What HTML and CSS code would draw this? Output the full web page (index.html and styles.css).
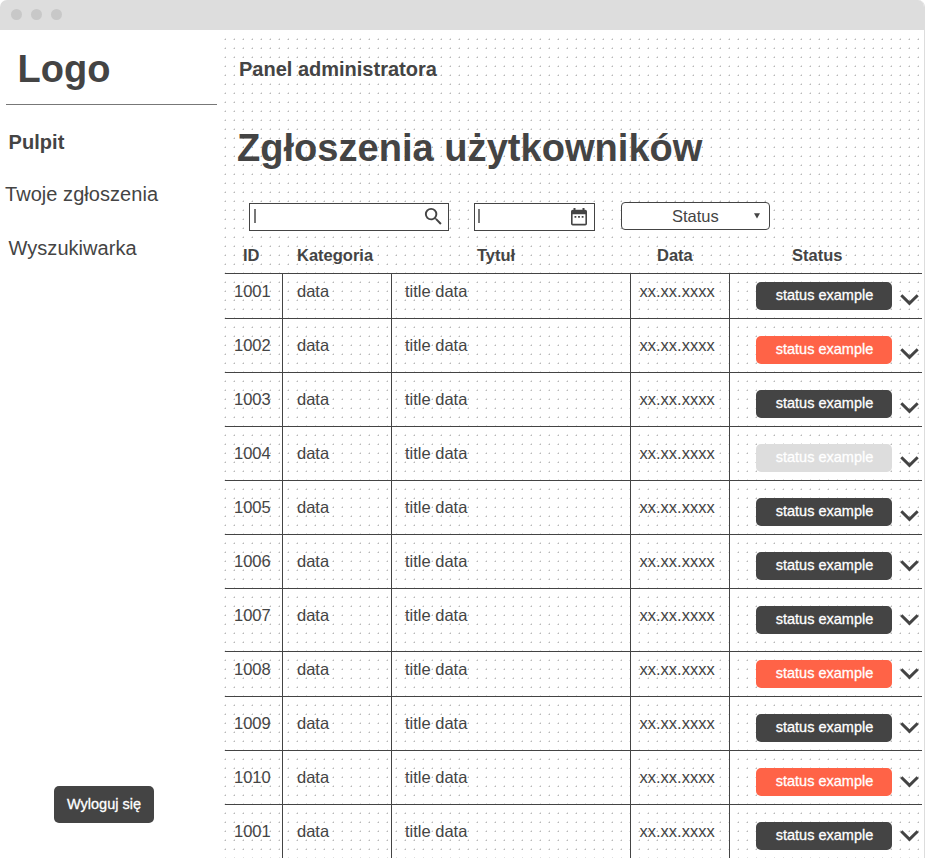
FILE: index.html
```
<!DOCTYPE html>
<html lang="pl">
<head>
<meta charset="utf-8">
<title>Panel administratora</title>
<link rel="stylesheet" href="styles.css">
</head>
<body>
<div class="window">
  <header class="titlebar"><i></i><i></i><i></i></header>
  <div class="body">
    <aside class="sidebar">
      <div class="logo"><span>Logo</span></div>
      <nav class="nav">
        <a class="active">Pulpit</a>
        <a class="wide">Twoje zgłoszenia</a>
        <a>Wyszukiwarka</a>
      </nav>
      <button class="logout">Wyloguj się</button>
    </aside>
    <main class="main">
      <p class="panel">Panel administratora</p>
      <h1>Zgłoszenia użytkowników</h1>
      <div class="filters">
        <div class="field search"><span class="caret"></span>
          <svg width="23" height="23" viewBox="0 0 24 24"><path fill="#444" d="M15.5 14h-.79l-.28-.27A6.47 6.47 0 0 0 16 9.5 6.5 6.5 0 1 0 9.5 16c1.61 0 3.09-.59 4.23-1.57l.27.28v.79l5 4.99L20.49 19l-4.99-5zm-6 0a4.5 4.5 0 1 1 0-9 4.5 4.5 0 0 1 0 9z"/></svg>
        </div>
        <div class="field date"><span class="caret"></span>
          <svg width="16" height="18" viewBox="0 0 16 18"><path fill="#444" fill-rule="evenodd" d="M2.5 0h2v1.8h7V0h2v1.8h.7A1.8 1.8 0 0 1 16 3.600v12.200A1.800 1.800 0 0 1 14.200 17.600H1.800A1.800 1.800 0 0 1 0 15.800V3.600A1.800 1.800 0 0 1 1.800 1.800h.7zM1.600 6.300v9.500h12.800V6.300zM3.500 8h1.800v1.700H3.500zm3.600 0h1.800v1.700H7.100zm3.600 0h1.800v1.700h-1.800z"/></svg>
        </div>
        <div class="select"><span>Status</span><svg width="6" height="6" viewBox="0 0 6 6"><path fill="#444" d="M0 .3h6L3 5.500z"/></svg></div>
      </div>
      <div class="thead"><span>ID</span><span>Kategoria</span><span>Tytuł</span><span>Data</span><span>Status</span></div>
      <div class="rows" id="rows"></div>
    </main>
  </div>
</div>
<script src="rows.js"></script>
</body>
</html>
```
FILE: styles.css
```
* { box-sizing: border-box; }
body {
  margin: 0;
  background: #fff;
  color: #444;
  font-family: "Liberation Sans", Arial, sans-serif;
}
.window {
  width: 925px;
  height: 858px;
  overflow: hidden;
  display: flex;
  flex-direction: column;
  border-radius: 7px 7px 0 0;
  border-right: 1px solid #ddd;
}
.titlebar {
  height: 30px;
  flex: none;
  margin-right: -1px;
  display: flex;
  gap: 9px;
  padding: 9px 11px;
  background: #ddd;
}
.titlebar i { width: 11px; height: 11px; border-radius: 50%; background: #c8c8c8; }
.body { flex: 1; min-height: 0; display: flex; }
.sidebar {
  width: 224px;
  flex: none;
  display: flex;
  flex-direction: column;
  align-items: flex-start;
}
.logo {
  width: 211px;
  height: 75px;
  margin-left: 6px;
  padding: 17px 0 0 11.500px;
  border-bottom: 1px solid #777;
  font-size: 38px;
  font-weight: bold;
  line-height: 44px;
}
.nav { display: flex; flex-direction: column; gap: 29px; padding: 25px 0 0 8.500px; }
.nav a { font-size: 20px; line-height: 24px; letter-spacing: .05px; white-space: nowrap; }
.nav .active { font-weight: bold; }
.nav .wide { margin: -1px 0 1px -3.500px; }
.logout {
  width: 100px;
  height: 37px;
  margin: auto 0 35px 54px;
  padding: 0 0 1px;
  border: 0;
  border-radius: 5px;
  background: #444;
  color: #fff;
  font: 14.5px "Liberation Sans", Arial, sans-serif;
  -webkit-text-stroke: .3px #fff;
}
.main {
  width: 698px;
  padding-top: 8px;
  background: url("data:image/svg+xml,%3Csvg xmlns='http://www.w3.org/2000/svg' width='9' height='9' shape-rendering='crispEdges'%3E%3Cpath fill='%23b8b8b8' d='M1 1h1v1H1z'/%3E%3Cpath fill='%23e0e0e0' d='M0 1h1v1H0zM1 0h1v1H1z'/%3E%3C/svg%3E") 0 0 / 9px 9px content-box;
}
.panel {
  margin: 19px 0 0 15px;
  font-size: 20px;
  font-weight: bold;
  line-height: 25px;
}
h1 { margin: 44px 0 0 13px; font-size: 38.100px; line-height: 45px; white-space: nowrap; }
.filters { display: flex; margin: 31px 0 0 25px; height: 30px; align-items: flex-start; }
.field {
  height: 28px;
  margin-top: 1px;
  display: flex;
  align-items: center;
  justify-content: space-between;
  border: 1px solid #444;
  background: #fff;
}
.search { width: 200px; padding: 0 3px 2px 4px; }
.date { width: 121px; margin-left: 25px; padding: 0 7.500px 0 3px; }
.caret { width: 2px; height: 14px; background: #777; }
.date .caret { margin-bottom: 2px; }
.select {
  width: 149px;
  height: 28px;
  margin-left: 26px;
  padding: 0 9px 0 50px;
  display: flex;
  align-items: center;
  justify-content: space-between;
  border: 1px solid #444;
  border-radius: 4px;
  background: #fff;
  font-size: 16.500px;
}
.thead, .row {
  display: grid;
  grid-template-columns: 58px 109px 239px 99px 192px;
  margin-left: 1px;
}
.thead { height: 42px; padding-top: 13px; font-size: 16.500px; font-weight: bold; line-height: 20px; }
.thead span:nth-child(1) { padding-left: 18px; }
.thead span:nth-child(2) { padding-left: 14px; }
.thead span:nth-child(3) { padding-left: 85px; }
.thead span:nth-child(4) { padding-left: 26px; }
.thead span:nth-child(5) { padding-left: 62px; }
.rows { margin-top: -1px; }
.row {
  height: 54px;
  border-top: 1px solid #444;
  font-size: 16.500px;
  line-height: 20px;
}
.row.tight { height: 45px; }
.row.tall { height: 63px; }
.row > div { padding-top: 16px; border-right: 1px solid #444; }
.row.tight > div { padding-top: 7px; }
.row > div:nth-child(1) { padding-left: 9px; }
.row > div:nth-child(2) { padding-left: 14px; }
.row > div:nth-child(3) { padding-left: 13px; }
.row > div:nth-child(4) { padding-left: 8.500px; }
.row > div.state { display: flex; align-items: flex-start; gap: 8px; padding-top: 17px; padding-left: 26px; border-right: 0; }
.row.tight > div.state { padding-top: 8px; }
.badge {
  width: 136px;
  height: 28px;
  border-radius: 5px;
  background: #444;
  color: #fff;
  padding-left: 1px;
  font-size: 14.5px;
  line-height: 27px;
  text-align: center;
  -webkit-text-stroke: .3px #fff;
}
.badge.red { background: #ff6347; }
.badge.grey { background: #ddd; color: #fff; }
.chev { margin-top: 12px; fill: none; stroke: #444; stroke-width: 3; }
.chev.high { margin-top: 8px; }
```
FILE: rows.js
```
const rows = [
  ["1001", "", "tight"], ["1002", "red", ""], ["1003", "", ""], ["1004", "grey", ""],
  ["1005", "", ""], ["1006", "", ""], ["1007", "", "tall"], ["1008", "red", "tight"],
  ["1009", "", ""], ["1010", "red", ""], ["1001", "", ""]
];
document.getElementById("rows").innerHTML = rows.map(([id, tone, size], i) => `
  <div class="row ${size}">
    <div>${id}</div><div>data</div><div>title data</div><div>xx.xx.xxxx</div>
    <div class="state"><span class="badge ${tone}">status example</span>
      <svg class="chev ${i > 4 ? "high" : ""}" width="19" height="12" viewBox="0 0 19 12"><path d="M1.300 1.300 9.500 9.400 17.700 1.300"/></svg></div>
  </div>`).join("");
```
